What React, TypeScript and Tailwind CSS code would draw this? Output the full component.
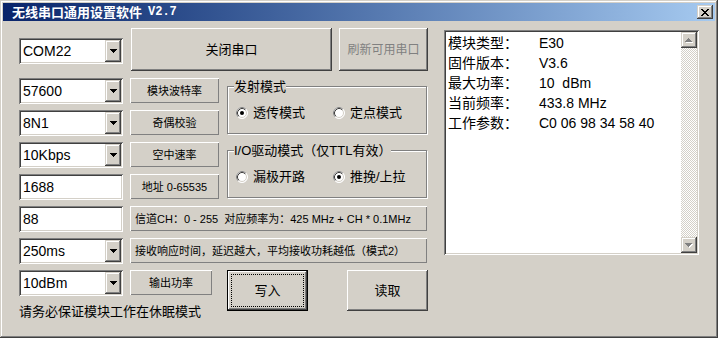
import React from "react";

const FONT = "font-['Liberation_Sans','Noto_Sans_CJK_SC',sans-serif]";
const SUNKEN =
  "shadow-[inset_1px_1px_0_#808080,inset_-1px_-1px_0_#ffffff,inset_2px_2px_0_#404040,inset_-2px_-2px_0_#d4d0c8]";
const RAISED =
  "shadow-[inset_-1px_-1px_0_#404040,inset_1px_1px_0_#ffffff,inset_-2px_-2px_0_#808080]";
const RAISED_SB =
  "shadow-[inset_-1px_-1px_0_#404040,inset_1px_1px_0_#d4d0c8,inset_-2px_-2px_0_#808080,inset_2px_2px_0_#ffffff]";
const THIN = "shadow-[inset_1px_1px_0_#ffffff,inset_-1px_-1px_0_#808080]";

function DownArrow({ color = "#000" }: { color?: string }) {
  return (
    <svg width="7" height="4" viewBox="0 0 7 4" shapeRendering="crispEdges">
      <rect x="0" y="0" width="7" height="1" fill={color} />
      <rect x="1" y="1" width="5" height="1" fill={color} />
      <rect x="2" y="2" width="3" height="1" fill={color} />
      <rect x="3" y="3" width="1" height="1" fill={color} />
    </svg>
  );
}

function DisabledArrow({ up }: { up: boolean }) {
  const rows = up
    ? [
        [3, 0, 1],
        [2, 1, 3],
        [1, 2, 5],
        [0, 3, 7],
      ]
    : [
        [0, 0, 7],
        [1, 1, 5],
        [2, 2, 3],
        [3, 3, 1],
      ];
  return (
    <svg width="8" height="5" viewBox="0 0 8 5" shapeRendering="crispEdges">
      {rows.map(([x, y, w], i) => (
        <rect key={"s" + i} x={x + 1} y={y + 1} width={w} height="1" fill="#ffffff" />
      ))}
      {rows.map(([x, y, w], i) => (
        <rect key={"g" + i} x={x} y={y} width={w} height="1" fill="#808080" />
      ))}
    </svg>
  );
}

function Radio({ checked }: { checked: boolean }) {
  return (
    <svg width="12" height="12" viewBox="0 0 12 12" className="shrink-0">
      <circle cx="6" cy="6" r="5.5" fill="#ffffff" stroke="#ffffff" />
      <path d="M2.11 9.89 A5.5 5.5 0 0 1 9.89 2.11" fill="none" stroke="#808080" strokeWidth="1" />
      <circle cx="6" cy="6" r="4.5" fill="#ffffff" stroke="#d4d0c8" />
      <path d="M2.82 9.18 A4.5 4.5 0 0 1 9.18 2.82" fill="none" stroke="#404040" strokeWidth="1" />
      {checked && <circle cx="6" cy="6" r="2" fill="#000000" />}
    </svg>
  );
}

function Combo({ value, arrow = true }: { value: string; arrow?: boolean }) {
  return (
    <div className={`w-[104px] h-[26px] shrink-0 bg-white ${SUNKEN} p-[2px] flex items-center`}>
      <span className="flex-1 pl-[2px] text-[14px] leading-[16px] text-black">{value}</span>
      {arrow && (
        <div className={`w-[16px] h-full bg-[#d4d0c8] ${RAISED_SB} flex items-center justify-center`}>
          <DownArrow />
        </div>
      )}
    </div>
  );
}

function Label({ text, w = "w-[89px]" }: { text: string; w?: string }) {
  return (
    <div
      className={`${w} h-[25px] ml-[7px] shrink-0 bg-[#d4d0c8] ${THIN} flex items-center justify-center text-[11px] leading-[14px] text-black`}
    >
      {text}
    </div>
  );
}

function LongLabel({ text }: { text: string }) {
  return (
    <div
      className={`w-[297px] h-[25px] ml-[7px] shrink-0 bg-[#d4d0c8] ${THIN} flex items-center pl-[5px] text-[11px] leading-[14px] text-black whitespace-pre`}
    >
      {text}
    </div>
  );
}

function Group({
  legend,
  a,
  b,
  checkedA,
  className,
}: {
  legend: string;
  a: string;
  b: string;
  checkedA: boolean;
  className: string;
}) {
  return (
    <div
      className={`relative h-[48px] border border-[#808080] shadow-[inset_1px_1px_0_#ffffff,1px_1px_0_#ffffff] ${className}`}
    >
      <span className="absolute left-[6px] -top-[8px] bg-[#d4d0c8] text-[13px] leading-[16px] text-black whitespace-pre">
        {legend}
      </span>
      <div className="flex items-center h-full pt-[6px] pl-[8px] text-[13px] leading-[16px] text-black">
        <div className="w-[97px] flex items-center gap-[5px]">
          <Radio checked={checkedA} />
          <span>{a}</span>
        </div>
        <div className="flex items-center gap-[5px]">
          <Radio checked={!checkedA} />
          <span>{b}</span>
        </div>
      </div>
    </div>
  );
}

function Row({ value, label, arrow = true }: { value: string; label: string; arrow?: boolean }) {
  return (
    <div className="flex items-start">
      <Combo value={value} arrow={arrow} />
      <Label text={label} />
    </div>
  );
}

export default function App() {
  const info: [string, string][] = [
    ["模块类型：", "E30"],
    ["固件版本：", "V3.6"],
    ["最大功率：", "10  dBm"],
    ["当前频率：", "433.8 MHz"],
    ["工作参数：", "C0 06 98 34 58 40"],
  ];
  return (
    <div
      className={`w-[718px] h-[338px] bg-[#d4d0c8] p-[3px] flex flex-col overflow-hidden ${FONT} shadow-[inset_-1px_-1px_0_#404040,inset_1px_1px_0_#d4d0c8,inset_-2px_-2px_0_#808080,inset_2px_2px_0_#ffffff]`}
    >
      {/* Title bar */}
      <div className="h-[18px] shrink-0 bg-linear-to-r from-[#0a246a] to-[#a6caf0] flex items-center pl-[9px] pr-[2px]">
        <span className="text-white font-bold text-[13px] leading-[16px] font-['Noto_Sans_CJK_SC',sans-serif]">
          无线串口通用设置软件
        </span>
        <span className="ml-[6px] text-white font-bold text-[12px] leading-[16px] font-['Liberation_Mono',monospace]">
          V2.7
        </span>
        <div className={`ml-auto w-[16px] h-[14px] bg-[#d4d0c8] ${RAISED_SB} flex items-center justify-center`}>
          <svg width="8" height="7" viewBox="0 0 8 7" shapeRendering="crispEdges">
            <path d="M0 0h2v1h-2z M6 0h2v1h-2z M1 1h2v1h-2z M5 1h2v1h-2z M2 2h4v1h-4z M3 3h2v1h-2z M2 4h4v1h-4z M1 5h2v1h-2z M5 5h2v1h-2z M0 6h2v1h-2z M6 6h2v1h-2z" fill="#000" />
          </svg>
        </div>
      </div>

      {/* Body */}
      <div className="flex flex-row pl-[16px] pt-[7px]">
        {/* Left column */}
        <div className="w-[409px] shrink-0 flex flex-col">
          {/* Row 1 */}
          <div className="flex items-start h-[43px]">
            <div className="mt-[10px]">
              <Combo value="COM22" />
            </div>
            <div
              className={`ml-[8px] w-[201px] h-[43px] bg-[#d4d0c8] ${RAISED} flex items-center justify-center text-[13px] leading-[16px] text-black`}
            >
              关闭串口
            </div>
            <div
              className={`ml-[7px] w-[89px] h-[43px] bg-[#d4d0c8] ${RAISED} flex items-center justify-center text-[12px] leading-[16px] text-[#808080]`}
            >
              刷新可用串口
            </div>
          </div>

          {/* Section 2 */}
          <div className="flex items-start mt-[7px]">
            <div className="w-[200px] flex flex-col gap-[6px]">
              <Row value="57600" label="模块波特率" />
              <Row value="8N1" label="奇偶校验" />
              <Row value="10Kbps" label="空中速率" />
              <Row value="1688" label="地址 0-65535" arrow={false} />
            </div>
            <div className="ml-[8px] w-[200px] flex flex-col">
              <Group legend="发射模式" a="透传模式" b="定点模式" checkedA={true} className="mt-[8px]" />
              <Group
                legend="I/O驱动模式（仅TTL有效）"
                a="漏极开路"
                b="推挽/上拉"
                checkedA={false}
                className="mt-[16px]"
              />
            </div>
          </div>

          {/* Row 88 */}
          <div className="flex items-start mt-[6px]">
            <Combo value="88" arrow={false} />
            <LongLabel text="信道CH：0 - 255  对应频率为：425 MHz + CH * 0.1MHz" />
          </div>

          {/* Row 250ms */}
          <div className="flex items-start mt-[6px]">
            <Combo value="250ms" />
            <LongLabel text="接收响应时间，延迟越大，平均接收功耗越低（模式2）" />
          </div>

          {/* Last section */}
          <div className="flex items-start mt-[6px]">
            <div className="w-[208px] flex flex-col">
              <div className="flex items-start">
                <Combo value="10dBm" />
                <Label text="输出功率" w="w-[82px]" />
              </div>
              <div className="mt-[8px] text-[13px] leading-[16px] text-black whitespace-nowrap">
                请务必保证模块工作在休眠模式
              </div>
            </div>
            <div className="w-[81px] h-[41px] border border-black bg-[#d4d0c8]">
              <div className={`w-full h-full ${RAISED} p-[3px]`}>
                <div className="w-full h-full border border-dotted border-black flex items-center justify-center text-[13px] leading-[16px] text-black">
                  写入
                </div>
              </div>
            </div>
            <div
              className={`ml-[39px] w-[81px] h-[41px] bg-[#d4d0c8] ${RAISED} flex items-center justify-center text-[13px] leading-[16px] text-black`}
            >
              读取
            </div>
          </div>
        </div>

        {/* Right panel */}
        <div className={`ml-[16px] mt-[2px] w-[255px] h-[225px] shrink-0 bg-white ${SUNKEN} p-[2px] flex`}>
          <div className="flex-1 pl-[2px] pt-[1px]">
            {info.map(([k, v]) => (
              <div key={k} className="flex h-[20px] items-center text-[14px] leading-[20px] text-black">
                <span className="w-[91px] shrink-0">{k}</span>
                <span className="whitespace-pre">{v}</span>
              </div>
            ))}
          </div>
          <div className="w-[16px] h-full flex flex-col">
            <div className={`h-[16px] shrink-0 bg-[#d4d0c8] ${RAISED_SB} flex items-center justify-center`}>
              <DisabledArrow up={true} />
            </div>
            <div className="flex-1 bg-[image:repeating-conic-gradient(#d4d0c8_0_25%,#ffffff_0_50%)] bg-[length:2px_2px]" />
            <div className={`h-[16px] shrink-0 bg-[#d4d0c8] ${RAISED_SB} flex items-center justify-center`}>
              <DisabledArrow up={false} />
            </div>
          </div>
        </div>
      </div>
    </div>
  );
}
